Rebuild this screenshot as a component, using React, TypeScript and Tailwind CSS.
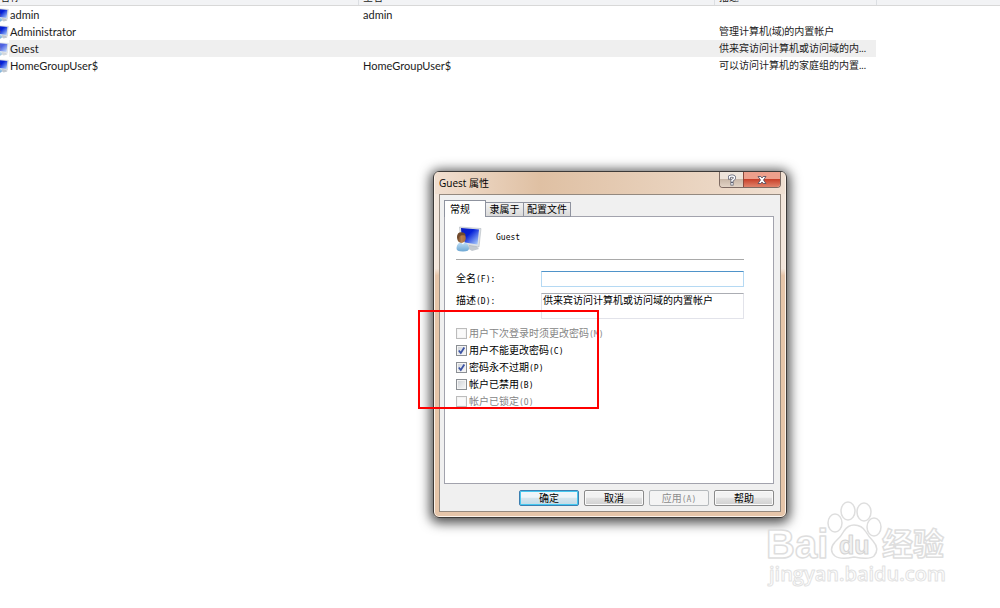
import { ReactNode } from "react";

interface User {
  name: string;
  fullName: string;
  description: string;
}

const users: User[] = [
  { name: "admin", fullName: "admin", description: "" },
  { name: "Administrator", fullName: "", description: "管理计算机(域)的内置帐户" },
  { name: "Guest", fullName: "", description: "供来宾访问计算机或访问域的内..." },
  { name: "HomeGroupUser$", fullName: "HomeGroupUser$", description: "可以访问计算机的家庭组的内置..." },
];

const options = [
  { id: "mustChange", label: "用户下次登录时须更改密码", letter: "(M)", checked: false, disabled: true },
  { id: "cannotChange", label: "用户不能更改密码", letter: "(C)", checked: true, disabled: false },
  { id: "neverExpires", label: "密码永不过期", letter: "(P)", checked: true, disabled: false },
  { id: "accountDisabled", label: "帐户已禁用", letter: "(B)", checked: false, disabled: false },
  { id: "accountLocked", label: "帐户已锁定", letter: "(O)", checked: false, disabled: true },
];

const Mono = ({ children }: { children: ReactNode }) => {
  return <span className="font-['DejaVu_Sans_Mono','Noto_Sans_CJK_SC',monospace] text-[8px]">{children}</span>
}

const UserIcon = ({ className }: { className: string }) => {
  return (
    <svg viewBox="0 0 26 26" className={className} aria-hidden="true">
      <defs>
        <linearGradient id="screen" x1="0" y1="0" x2="1" y2="1">
          <stop offset="0" stopColor="#0a1cc0" />
          <stop offset="0.4" stopColor="#0420d8" />
          <stop offset="1" stopColor="#b9dcff" />
        </linearGradient>
        <linearGradient id="shirt" x1="0" y1="0" x2="0" y2="1">
          <stop offset="0" stopColor="#c4e2f8" />
          <stop offset="1" stopColor="#6ba6d3" />
        </linearGradient>
        <linearGradient id="skin" x1="0" y1="0" x2="1" y2="0">
          <stop offset="0" stopColor="#6d4526" />
          <stop offset="0.5" stopColor="#b9804f" />
          <stop offset="1" stopColor="#a56b3d" />
        </linearGradient>
      </defs>
      <path d="M14 18 L20 19.500 L23 23 L16 25 L11 22 Z" fill="#c3c9d0" />
      <path d="M3.500 1 L25 2.500 L23 21 L5 18 Z" fill="#dde1e6" stroke="#a7aeb7" strokeWidth="0.500" />
      <path d="M5 2 L23 3.500 L21.500 18.500 L6 16 Z" fill="url(#screen)" />
      <path d="M0.500 22 Q1 16.500 6 16 Q12 16 13 22 Q13.500 25.500 7 25.500 Q0 25.500 0.500 22 Z" fill="url(#shirt)" />
      <path d="M4 15.500 L7 18.500 L9 15.500 Z" fill="#fff" />
      <ellipse cx="5.500" cy="12" rx="4.300" ry="5" fill="url(#skin)" />
      <path d="M1 11.500 Q1 6 5.500 6.300 Q9.500 6.500 9.700 9.500 Q5 8.500 3.500 10.500 L2.200 13.500 Z" fill="#704a2c" />
    </svg>
  )
}

const UserTable = () => {
  return (
    <table className="w-full table-fixed border-collapse text-left text-[11px] leading-[17px] text-[#1b1b1b]">
      <colgroup>
        <col className="w-[358px]" />
        <col className="w-[356px]" />
        <col className="w-[162px]" />
        <col />
      </colgroup>
      <thead>
        <tr className="bg-[#f2f3f5]">
          {["名称", "全名", "描述", ""].map((title, index) => (
            <th key={index} className="border-b border-[#d8d8d8] p-0 font-normal">
              <div className={`flex h-[5px] items-end overflow-hidden pb-0.5 text-[10px] leading-3 ${index === 0 ? "pl-0" : "border-l border-[#dcdfe3] pl-1"}`}>{title}</div>
            </th>
          ))}
        </tr>
      </thead>
      <tbody>
        {users.map((user) => {
          const selected = user.name === "Guest";
          const row = selected ? "bg-[#efefef]" : "";
          return (
            <tr key={user.name} className="h-[17px]">
              <td className="p-0">
                <div className="flex h-[17px] items-center">
                  <span className="flex w-[9px] justify-end overflow-hidden">
                    <UserIcon className={`size-[14px] shrink-0 ${selected ? "opacity-70" : ""}`} />
                  </span>
                  <span className={`grow pl-px ${row}`}>{user.name}</span>
                </div>
              </td>
              <td className={`p-0 pl-[5px] ${row}`}>{user.fullName}</td>
              <td className={`p-0 pl-[5px] ${row}`}>
                <div className="h-[17px] whitespace-nowrap text-[10px]">{user.description}</div>
              </td>
              <td className="p-0"></td>
            </tr>
          )
        })}
      </tbody>
    </table>
  )
}

const TitleBar = () => {
  return (
    <header className="flex h-[22px] items-start justify-between">
      <h1 className="font-['Open_Sans','Noto_Sans_CJK_SC',sans-serif] text-[10px] leading-[22px] text-black">Guest 属性</h1>
      <div className="flex h-4 overflow-hidden rounded-b border border-t-0 border-[#7d6a62]">
        <button aria-label="帮助主题" className="grid w-[23px] place-items-center bg-linear-to-b from-[#eee4da] from-45% via-[#c9b8a8] via-50% to-[#e2d3c5]">
          <svg viewBox="0 0 10 12" className="h-3 w-2.5" fill="none" strokeLinecap="square">
            <path d="M2.500 4 V3 Q2.500 2 5 2 Q7.500 2 7.500 4 Q7.500 5 5 6.500 V7 M5 9.800 V9.900" stroke="#5b5f70" strokeWidth="3" />
            <path d="M2.500 4 V3 Q2.500 2 5 2 Q7.500 2 7.500 4 Q7.500 5 5 6.500 V7 M5 9.800 V9.900" stroke="#fff" strokeWidth="1.500" />
          </svg>
        </button>
        <button aria-label="关闭" className="grid w-[37px] place-items-center border-l border-[#8c4a3c] bg-linear-to-b from-[#eda08c] from-45% via-[#c8412a] via-50% to-[#e0826a]">
          <svg viewBox="0 0 10 10" className="size-2.5">
            <path d="M1 1.500 H3.800 L5 3 L6.200 1.500 H9 L6.500 5 L9 8.500 H6.200 L5 7 L3.800 8.500 H1 L3.500 5 Z" fill="#fff" stroke="#5a5060" strokeWidth="0.900" />
          </svg>
        </button>
      </div>
    </header>
  )
}

const Options = () => {
  return (
    <div className="mt-1.5">
      {options.map((option) => (
        <div key={option.id} className="flex h-[17px] items-center gap-0.5">
          <span className="grid size-[11px] shrink-0">
            <input
              type="checkbox"
              id={option.id}
              defaultChecked={option.checked}
              disabled={option.disabled}
              className="peer col-start-1 row-start-1 size-[11px] appearance-none border border-[#8b8f94] bg-linear-to-br from-[#ccd0d5] to-[#fafafa] shadow-[inset_0_0_0_1px_#f4f4f4] disabled:border-[#bcbcbc] disabled:from-[#fafafa]"
            />
            <svg viewBox="0 0 11 11" className="pointer-events-none col-start-1 row-start-1 hidden size-[11px] peer-checked:block">
              <path d="M2.800 5.500 L4.800 8 L8.300 2.500" fill="none" stroke="#3b53a4" strokeWidth="1.800" />
            </svg>
          </span>
          <label htmlFor={option.id} className={`whitespace-nowrap ${option.disabled ? "text-[#858585]" : "text-black"}`}>
            {option.label}<Mono>{option.letter}</Mono>
          </label>
        </div>
      ))}
    </div>
  )
}

const PropertiesDialog = () => {
  const button = "h-4 w-[60px] rounded-xs border border-[#8a8a8a] bg-linear-to-b from-[#f2f2f2] from-45% via-[#e2e2e2] via-50% to-[#d0d0d0] leading-[14px] shadow-[inset_0_0_0_1px_#fafafa]";
  return (
    <section className="absolute top-[171px] left-[433px] w-[354px] rounded-md border border-[#3d3a38] bg-linear-to-b from-[#f3e6db] from-28% to-[#e6c5a9] to-30% px-[5px] pb-[5px] text-[10px] text-black shadow-[0_2px_12px_3px_rgba(0,0,0,0.7),inset_0_0_0_1px_#fbf1e8]">
      <div className="-mx-1 rounded-t bg-linear-to-r from-[#f1dfd0] via-[#dfc0a3] via-30% to-[#f0e0d2] px-1">
        <TitleBar />
      </div>
      <div className="border border-[#94897f] bg-[#f0f0f0] pt-[5px] pr-1.5 pb-[5px] pl-1">
        <div role="tablist" className="relative -mb-px flex items-end">
          <button role="tab" aria-selected="true" className="h-[17px] w-[42px] border border-b-0 border-[#8f939f] bg-white pr-2.5 leading-[15px]">常规</button>
          <button role="tab" aria-selected="false" className="h-[15px] w-[38px] border border-l-0 border-[#8f939f] bg-linear-to-b from-[#f3f3f3] to-[#dadada] leading-[13px]">隶属于</button>
          <button role="tab" aria-selected="false" className="h-[15px] w-[47px] border border-l-0 border-[#8f939f] bg-linear-to-b from-[#f3f3f3] to-[#dadada] leading-[13px]">配置文件</button>
        </div>
        <div role="tabpanel" className="h-[268px] border border-[#a2a3ad] bg-white pt-[9px] pr-[29px] pl-[11px]">
          <div className="flex gap-3.5 border-b border-[#a9a9a9] pb-[7px]">
            <UserIcon className="size-[26px]" />
            <span className="leading-5"><Mono>Guest</Mono></span>
          </div>
          <div className="mt-[11px] grid grid-cols-[85px_1fr] grid-rows-[16px_26px] gap-y-1.5">
            <label htmlFor="fullName" className="leading-[14px]">全名<Mono>(F):</Mono></label>
            <input id="fullName" className="h-4 w-full border border-[#b5d9f3] border-t-[#4f93c9] bg-white px-0.5 outline-none" />
            <label htmlFor="description" className="leading-[14px]">描述<Mono>(D):</Mono></label>
            <textarea id="description" defaultValue="供来宾访问计算机或访问域的内置帐户" className="h-[26px] w-full resize-none overflow-hidden border border-[#e2e3ea] border-t-[#abadb3] bg-white px-px leading-3 outline-none" />
          </div>
          <Options />
        </div>
        <div className="mt-1.5 flex justify-end gap-[5px]">
          <button className="h-4 w-[60px] rounded-xs border border-[#3c7fb1] bg-linear-to-b from-[#eef5f9] from-45% via-[#d5e6ee] via-50% to-[#c2dae6] leading-[14px] shadow-[inset_0_0_0_1px_#46c8f0]">确定</button>
          <button className={button}>取消</button>
          <button disabled className="h-4 w-[60px] rounded-xs border border-[#b5b9bc] bg-[#f4f4f4] leading-[14px] text-[#8c8c8c]">应用<Mono>(A)</Mono></button>
          <button className={button}>帮助</button>
        </div>
      </div>
    </section>
  )
}

const Watermark = () => {
  return (
    <svg viewBox="0 0 190 96" className="absolute top-[496px] left-[762px] h-24 w-[190px]" fill="#fff" stroke="#dedede" strokeWidth="1.500" strokeLinejoin="round" role="img" aria-label="Baidu 经验">
      <text x="4" y="62" className="font-['Liberation_Sans',sans-serif] text-[40px] font-bold">Bai</text>
      <ellipse cx="73" cy="27" rx="7" ry="9" />
      <ellipse cx="86" cy="15" rx="7" ry="9" />
      <ellipse cx="102" cy="16" rx="7" ry="9" />
      <ellipse cx="112" cy="31" rx="7" ry="9" />
      <path d="M92 29 Q100 29 104 36 Q107 41 111 45 Q118 53 112 60 Q108 64 92 61 Q78 64 73 60 Q66 54 73 46 Q79 41 82 35 Q86 29 92 29 Z" />
      <text x="77" y="58" fill="#f0f0f0" stroke="#d4d4d4" strokeWidth="1" className="font-['Liberation_Sans',sans-serif] text-[25px] font-bold">du</text>
      <text x="120" y="59" className="font-['Noto_Sans_CJK_SC',sans-serif] text-[31px] font-bold">经验</text>
      <text x="7" y="85" stroke="#e2e2e2" strokeWidth="1" className="font-['Open_Sans',sans-serif] text-[20px] font-semibold">jingyan.baidu.com</text>
    </svg>
  )
}

export default function App() {
  return (
    <main className="relative min-h-screen overflow-hidden bg-white font-['Lato','Noto_Sans_CJK_SC',sans-serif]">
      <UserTable />
      <PropertiesDialog />
      <Watermark />
      <div className="pointer-events-none absolute top-[310px] left-[418px] h-[99px] w-[181px] border-2 border-[#ff0000]"></div>
    </main>
  )
}
